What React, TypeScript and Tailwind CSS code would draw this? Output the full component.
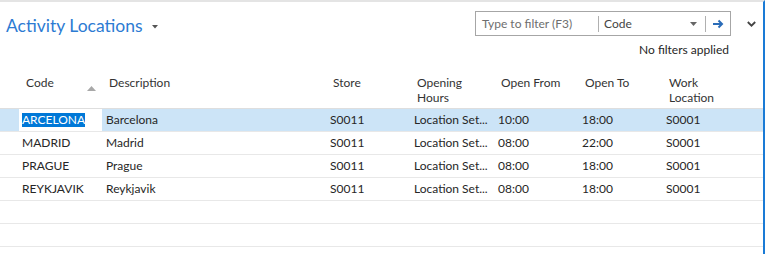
export default function App() {
  const rows = [
    { code: "ARCELONA", desc: "Barcelona", store: "S0011", hours: "Location Set...", from: "10:00", to: "18:00", work: "S0001", selected: true },
    { code: "MADRID", desc: "Madrid", store: "S0011", hours: "Location Set...", from: "08:00", to: "22:00", work: "S0001" },
    { code: "PRAGUE", desc: "Prague", store: "S0011", hours: "Location Set...", from: "08:00", to: "18:00", work: "S0001" },
    { code: "REYKJAVIK", desc: "Reykjavik", store: "S0011", hours: "Location Set...", from: "08:00", to: "18:00", work: "S0001" },
  ];

  return (
    <div className="h-[254px] w-[765px] overflow-hidden border-t-2 border-r-2 border-t-[#e4e4e4] border-r-[#1a7bd6] bg-white font-['Lato',sans-serif] text-[12px] text-[#262626]">
      {/* Top bar */}
      <div className="flex h-[72px] items-start">
        <div className="ml-[6px] mt-[11px] flex items-center">
          <span className="text-[17.5px] leading-[26px] text-[#2c7bd3]">Activity Locations</span>
          <svg className="ml-[9px] mt-[1px]" width="6" height="4" viewBox="0 0 6 4">
            <path d="M0 0h6L3 3.5z" fill="#555" />
          </svg>
        </div>
        <div className="ml-auto flex flex-col items-end">
          <div className="mt-[9px] flex items-center">
            <div className="flex h-[25px] w-[256px] items-center border border-[#a6a6a6]">
              <span className="w-[122px] pl-[6px] text-[#6e6e6e]">Type to filter (F3)</span>
              <span className="h-[16px] w-px bg-[#b0b0b0]" />
              <span className="flex-1 pl-[5px] text-[#444]">Code</span>
              <svg className="mr-[8px]" width="7" height="4" viewBox="0 0 7 4">
                <path d="M0 0h7L3.5 4z" fill="#666" />
              </svg>
              <span className="h-[16px] w-px bg-[#b0b0b0]" />
              <svg className="mx-[6px]" width="12" height="10" viewBox="0 0 12 10">
                <path d="M1 5h9M6.5 1.5L10 5l-3.5 3.5" fill="none" stroke="#2a6cb8" strokeWidth="2" />
              </svg>
            </div>
            <svg className="ml-[16px] mr-[7px]" width="9" height="6" viewBox="0 0 9 6">
              <path d="M0.8 1l3.7 3.7L8.2 1" fill="none" stroke="#444" strokeWidth="1.8" />
            </svg>
          </div>
          <span className="mr-[34px] mt-[6px] leading-[16px] text-[#262626]">No filters applied</span>
        </div>
      </div>

      {/* Column headers */}
      <div className="flex h-[35px] border-b border-[#dedede] pl-[19px] leading-[15px] text-[#333]">
        <div className="relative w-[84px] pl-[7px] pt-[1px]">
          Code
          <svg className="absolute right-[7px] top-[12px]" width="9" height="5" viewBox="0 0 9 5">
            <path d="M0 5L4.5 0 9 5z" fill="#a8a8a8" />
          </svg>
        </div>
        <div className="w-[224px] pl-[6px] pt-[1px]">Description</div>
        <div className="w-[84px] pl-[6px] pt-[1px]">Store</div>
        <div className="w-[84px] pl-[6px] pt-[1px]">Opening<br />Hours</div>
        <div className="w-[84px] pl-[6px] pt-[1px]">Open From</div>
        <div className="w-[84px] pl-[6px] pt-[1px]">Open To</div>
        <div className="w-[84px] pl-[6px] pt-[1px]">Work<br />Location</div>
      </div>

      {/* Rows */}
      {rows.map((r) => (
        <div
          key={r.code}
          className={`flex h-[23px] items-center border-b border-[#e8e8e8] pl-[19px] ${r.selected ? "bg-[#cce4f7]" : ""}`}
        >
          <div className={`mr-px flex h-full w-[83px] items-center pl-[3px] ${r.selected ? "bg-white" : ""}`}>
            {r.selected ? (
              <span className="bg-[#0078d7] leading-[14px] text-white">{r.code}</span>
            ) : (
              r.code
            )}
          </div>
          <div className="w-[224px] pl-[3px]">{r.desc}</div>
          <div className="w-[84px] pl-[3px]">{r.store}</div>
          <div className="w-[84px] pl-[3px]">{r.hours}</div>
          <div className="w-[84px] pl-[3px]">{r.from}</div>
          <div className="w-[84px] pl-[3px]">{r.to}</div>
          <div className="w-[84px] pl-[3px]">{r.work}</div>
        </div>
      ))}
      <div className="h-[23px] border-b border-[#e8e8e8]" />
      <div className="h-[23px] border-b border-[#e8e8e8]" />
    </div>
  );
}
